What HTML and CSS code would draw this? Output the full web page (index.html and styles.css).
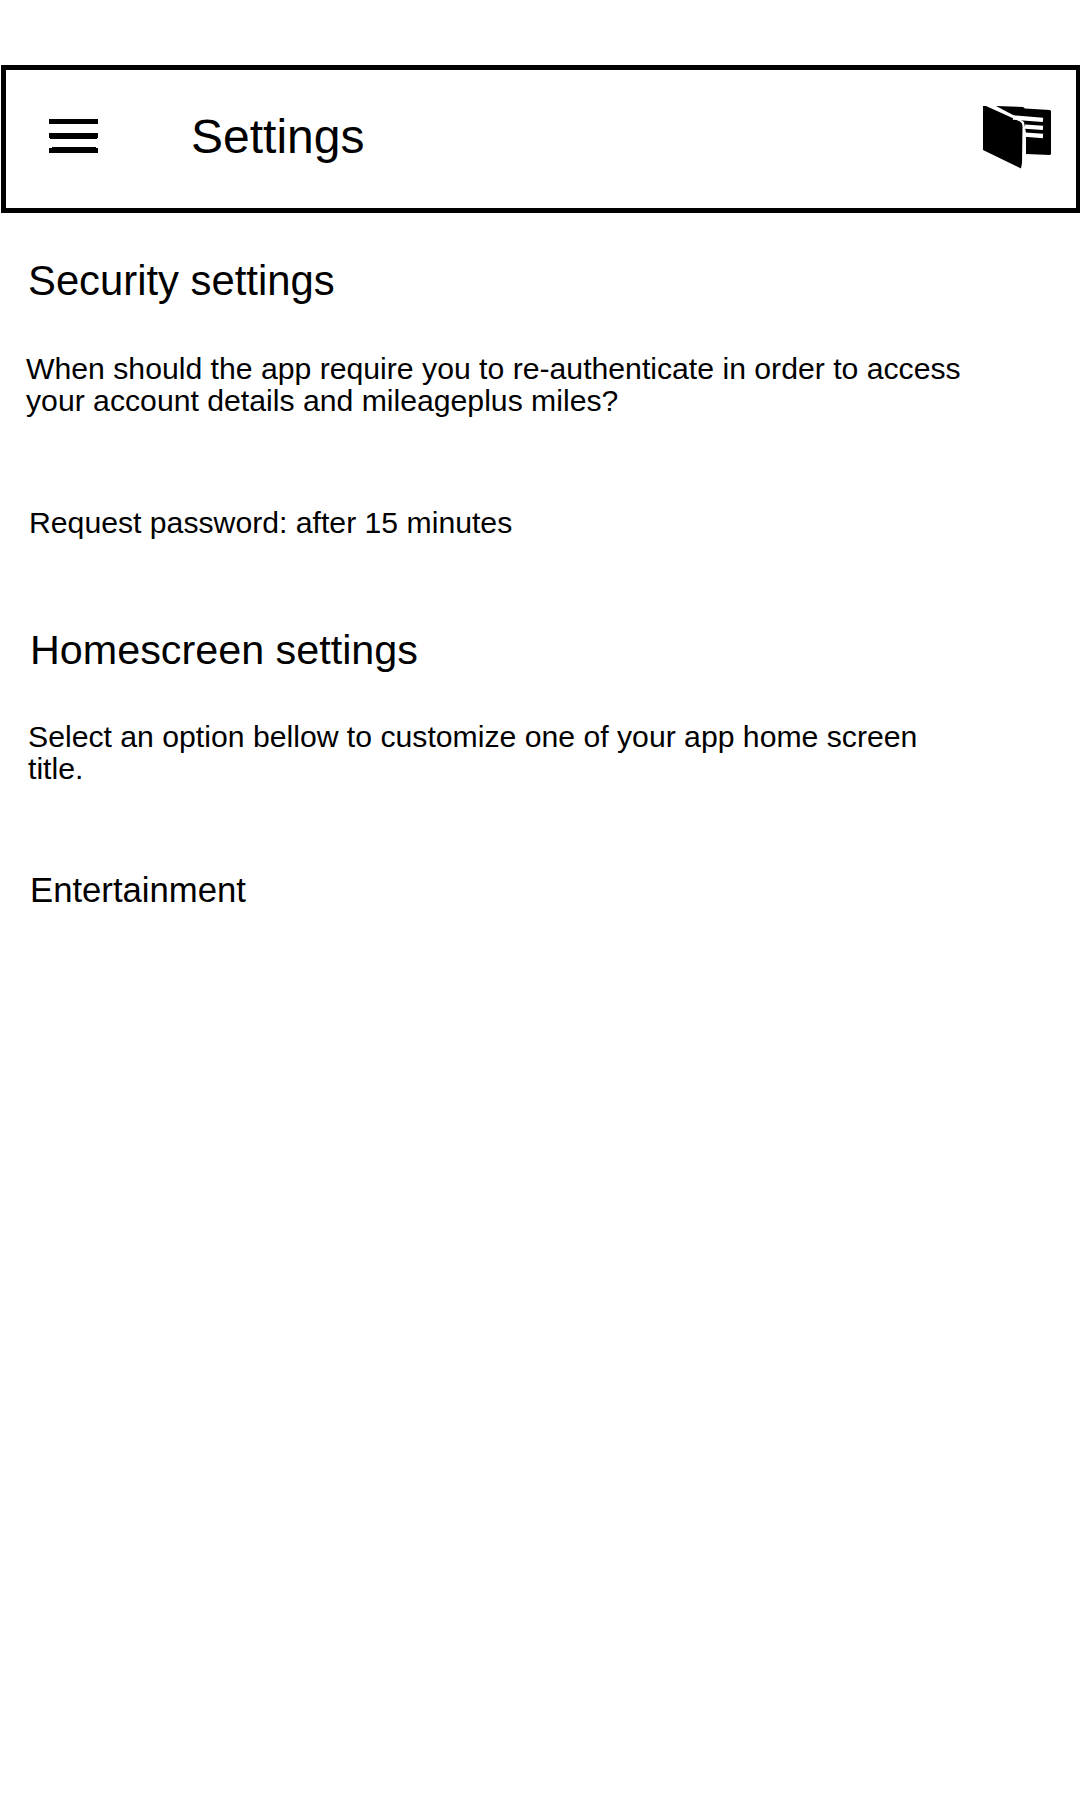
FILE: index.html
```html
<!DOCTYPE html>
<html lang="en"><head><meta charset="utf-8"><title>Settings</title><link rel="stylesheet" href="styles.css"></head>
<body>
<header class="bar">
<svg class="menu" width="49" height="34" viewBox="0 0 49 34"><path d="M0 0H49V5H0ZM0 14H49V19H48V20H1V19H0ZM0 29H3V28H47V29H49V34H0Z"/></svg>
<h1 class="title">Settings</h1>
<svg class="book" width="70" height="64" viewBox="0 0 70 64"><path d="M1 1L4 1L38 16.5Q40.5 18 40.5 21L40 58L39 63.5L1 45Z"/><path d="M14 1L41 2L43 3.500L68 5L69 6V49L68 50L44 49V28L42 17L32 10.500Z"/><path d="M31 12.500L61 14.800M43 21.700L61 22.800M43 29.700L61 31" stroke="#fff" stroke-width="4.300"/></svg>
</header>
<main class="content">
<h2 class="heading security">Security settings</h2>
<p class="text prompt">When should the app require you to re-authenticate in order to access<br>your account details and mileageplus miles?</p>
<p class="text password">Request password: after 15 minutes</p>
<h2 class="heading home">Homescreen settings</h2>
<p class="text select">Select an option bellow to customize one of your app home screen<br>title.</p>
<p class="option">Entertainment</p>
</main>
</body></html>
```

FILE: styles.css
```css
* { box-sizing: border-box; }
body { margin: 0; padding: 65px 0 0 1px; background: #fff; color: #000; font-family: "Liberation Sans", Arial, sans-serif; }
h1, h2, p { margin: 0; font-weight: 400; white-space: nowrap; }
.bar { height: 148px; border: 5px solid #000; border-right-width: 4px; display: flex; align-items: flex-start; padding: 0 24px 0 43px; }
.menu { margin-top: 49px; }
.title { font-size: 48px; line-height: 56px; margin: 39px 0 0 93px; }
.book { margin: 35px 0 0 auto; }
.content { display: flex; flex-direction: column; align-items: flex-start; padding: 44px 0 0 25px; }
.heading { font-size: 41.8px; line-height: 48px; }
.security { margin-left: 2px; }
.text { font-size: 30.2px; line-height: 32px; }
.prompt { margin-top: 48px; }
.password { margin: 90px 0 0 3px; }
.home { font-size: 41.3px; margin: 87px 0 0 4px; }
.select { margin: 47px 0 0 2px; }
.option { font-size: 34.7px; line-height: 40px; margin: 85px 0 0 4px; }
```
